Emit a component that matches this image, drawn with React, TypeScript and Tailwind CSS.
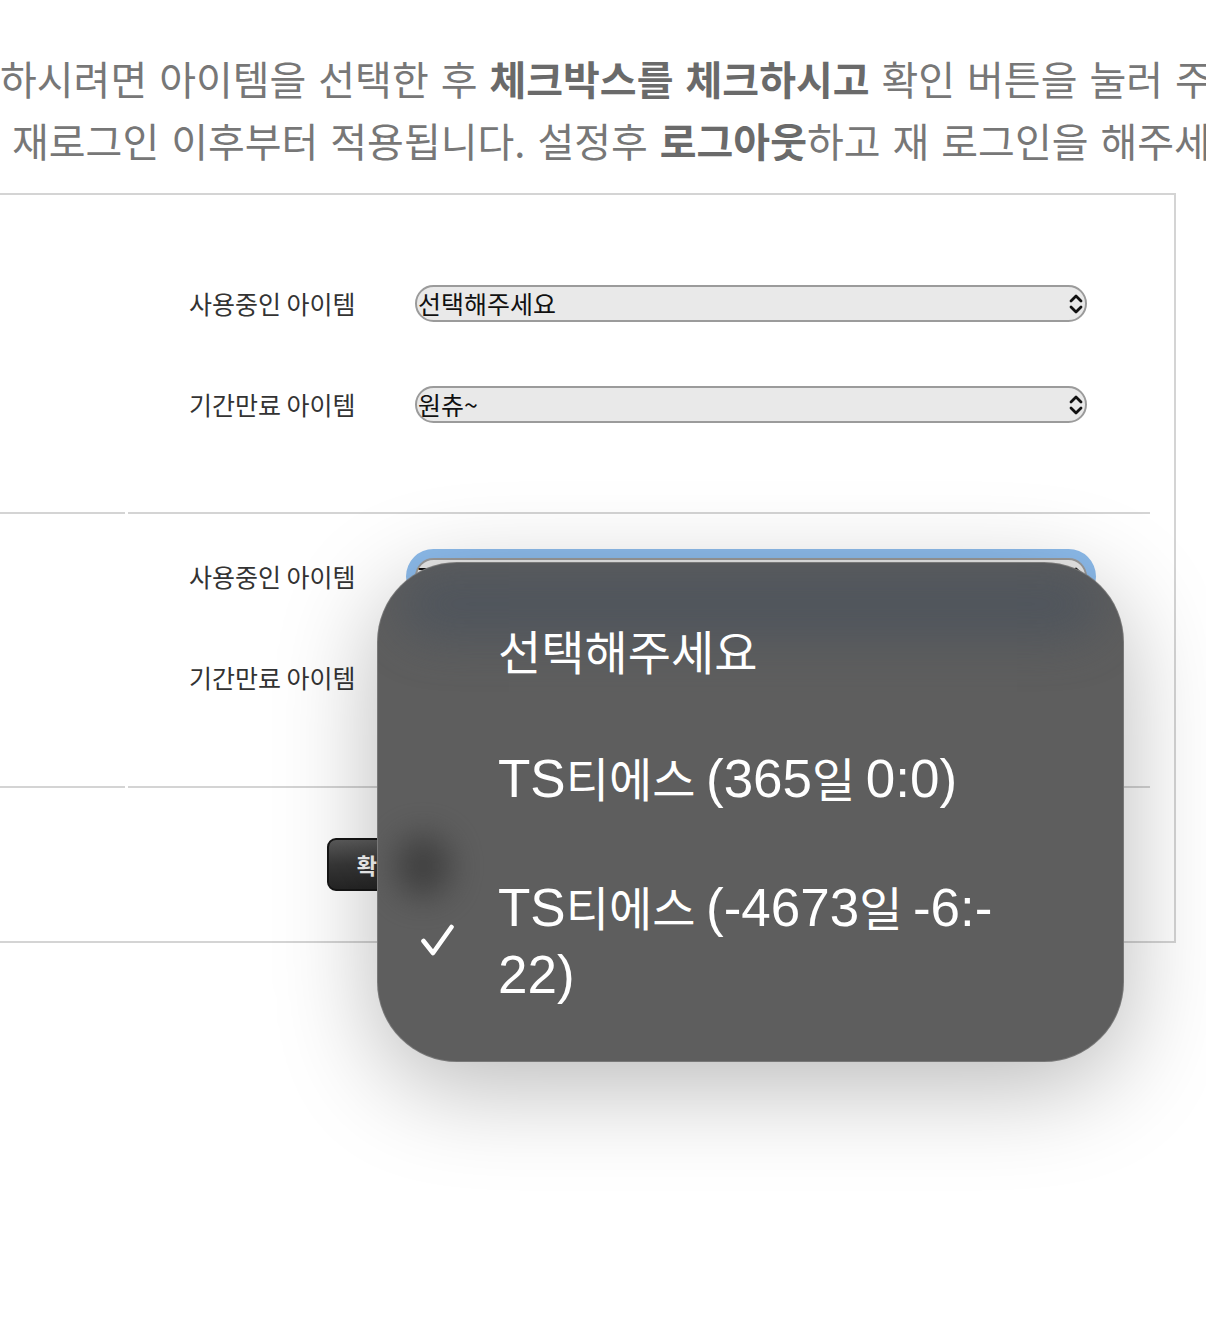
import React from "react"

const kr = "font-['Noto_Sans_CJK_KR',sans-serif]"
const lat = "font-['Liberation_Sans','Noto_Sans_CJK_KR',sans-serif] text-[53px]"

function Chevron() {
  return (
    <svg width="16" height="22" viewBox="0 0 16 22" className="shrink-0">
      <path d="M3 8 L8 3 L13 8" fill="none" stroke="#111" strokeWidth="2.8" strokeLinecap="round" strokeLinejoin="round" />
      <path d="M3 14 L8 19 L13 14" fill="none" stroke="#111" strokeWidth="2.8" strokeLinecap="round" strokeLinejoin="round" />
    </svg>
  )
}

function Select({ value, focus }: { value: string; focus?: boolean }) {
  return (
    <div
      className={`flex h-[37px] w-[672px] items-center justify-between rounded-full border-2 border-[#9b9b9b] bg-[#e9e9e9] pl-[1px] pr-[1px] text-[25px] leading-none text-[#111] ${
        focus ? "ring-[9px] ring-[#8dbcec]" : ""
      }`}
    >
      <span className="truncate">{value}</span>
      <Chevron />
    </div>
  )
}

function Row({ label, value, focus }: { label: string; value: string; focus?: boolean }) {
  return (
    <div className="grid h-[101px] grid-cols-[226px_672px] items-center pl-[61px]">
      <span className="text-[25px] text-[#333]">{label}</span>
      <Select value={value} focus={focus} />
    </div>
  )
}

function Section({ children, className }: { children: React.ReactNode; className: string }) {
  return (
    <div className="flex gap-[3px]">
      <div className={`w-[133px] border-b-2 border-[#d4d4d4] ${className}`} />
      <div className={`w-[1022px] border-b-2 border-[#d4d4d4] ${className}`}>{children}</div>
    </div>
  )
}

function App() {
  return (
    <div className={`relative h-[1335px] w-full overflow-hidden bg-white ${kr}`}>
      <div className="pt-[47px] text-[40px] leading-[62px] text-[#777] whitespace-nowrap [word-spacing:3px]">
        <div>
          하시려면 아이템을 선택한 후 <b className="font-bold text-[#6a6a6a]">체크박스를 체크하시고</b> 확인 버튼을 눌러 주세요.
        </div>
        <div className="ml-[12px]">
          재로그인 이후부터 적용됩니다. 설정후 <b className="font-bold text-[#6a6a6a]">로그아웃</b>하고 재 로그인을 해주세요.
        </div>
      </div>

      <div className="-ml-[10px] mt-[22px] w-[1186px] border-2 border-[#d4d4d4] pr-[24px]">
        <Section className="h-[319px] pt-[58px]">
          <Row label="사용중인 아이템" value="선택해주세요" />
          <Row label="기간만료 아이템" value="원츄~" />
        </Section>
        <Section className="h-[274px] pt-[12px]">
          <Row label="사용중인 아이템" value="TS티에스 (-4673일 -6:-22)" focus />
          <Row label="기간만료 아이템" value="원츄~" />
        </Section>
        <div className="flex h-[153px] items-center pl-[335px]">
          <button className="h-[53px] w-[100px] rounded-[9px] border-2 border-[#161616] bg-linear-to-b from-[#5c5c5c] via-[#383838] to-[#262626] text-[22px] font-bold text-white">
            확인
          </button>
        </div>
      </div>

      {/* native picker popover */}
      <div className="absolute left-[377px] top-[562px] h-[500px] w-[747px] overflow-hidden rounded-[80px] border border-[#8a8a8a]/60 bg-[#5e5e5e] pt-[23px] text-[47px] leading-[65px] text-white shadow-[0_24px_100px_rgba(0,0,0,0.28)]">
        <div className="absolute inset-x-[20px] top-[6px] h-[70px] rounded-[40px] bg-[#4c535c] opacity-80 blur-xl" />
        <div className="absolute left-[18px] top-[272px] h-[62px] w-[54px] rounded-full bg-[#3c3c3c] opacity-90 blur-lg" />
        <div className="relative py-[31px] pl-[120px]">선택해주세요</div>
        <div className="relative py-[31px] pl-[120px]">
          <span className={lat}>TS</span>티에스 <span className={lat}>(365</span>일 <span className={lat}>0:0)</span>
        </div>
        <div className="relative py-[31px] pl-[120px]">
          <svg width="34" height="32" viewBox="0 0 34 32" className="absolute left-[43px] top-1/2 -translate-y-1/2">
            <path d="M2.5 17 L12 29 L30.5 3" fill="none" stroke="#fff" strokeWidth="4.6" strokeLinecap="round" strokeLinejoin="round" />
          </svg>
          <span className={lat}>TS</span>티에스 <span className={lat}>(-4673</span>일 <span className={lat}>-6:-</span>
          <br />
          <span className={lat}>22)</span>
        </div>
      </div>
    </div>
  )
}

export default App
